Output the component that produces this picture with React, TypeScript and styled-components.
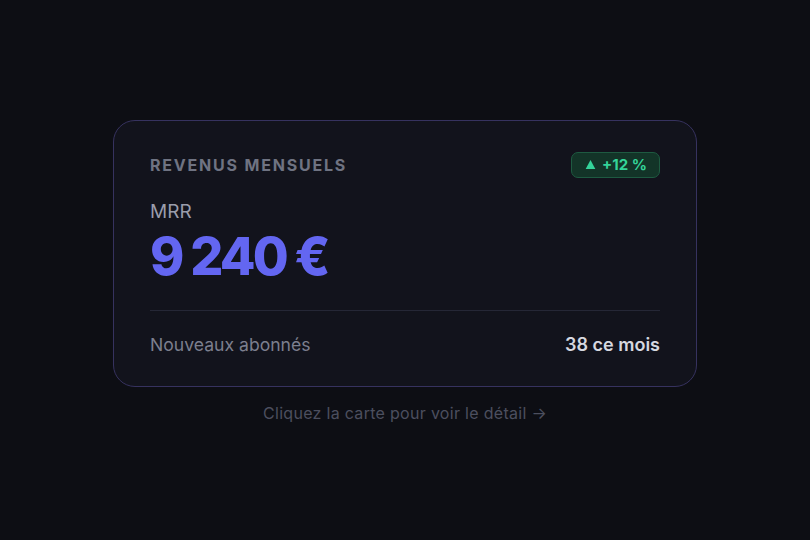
import React from "react";
import styled, { createGlobalStyle } from "styled-components";

const Global = createGlobalStyle`
  html, body { margin: 0; padding: 0; background: #0d0e14; }
  body { font-family: Inter, "Noto Sans", sans-serif; -webkit-font-smoothing: antialiased; }
`;

const Page = styled.div`
  width: 810px;
  height: 540px;
  display: flex;
  flex-direction: column;
  align-items: center;
  justify-content: center;
  gap: 17px;
  box-sizing: border-box;
  padding-top: 2px;
`;

const Card = styled.div`
  width: 584px;
  box-sizing: border-box;
  padding: 31px 36px 30px 36px;
  background: #12131c;
  border: 1px solid #36325f;
  border-radius: 22px;
  cursor: pointer;
`;

const Header = styled.div`
  display: flex;
  justify-content: space-between;
  align-items: center;
`;

const Title = styled.div`
  font-size: 16px;
  font-weight: 700;
  letter-spacing: 1.8px;
  color: #6f7382;
  text-transform: uppercase;
`;

const Badge = styled.div`
  display: flex;
  align-items: center;
  gap: 6px;
  height: 26px;
  box-sizing: border-box;
  padding: 0 12px 0 13px;
  border-radius: 7px;
  background: #133428;
  border: 1px solid #1e5a41;
  color: #34d399;
  font-size: 15px;
  font-weight: 700;
`;

const Label = styled.div`
  margin-top: 22px;
  font-size: 19px;
  line-height: 23px;
  color: #9a9dab;
`;

const Value = styled.div`
  margin-top: 4px;
  font-size: 52px;
  line-height: 60px;
  font-weight: 800;
  letter-spacing: -2.8px;
  color: #6366f1;
`;

const Divider = styled.div`
  height: 1px;
  background: #252736;
  margin-top: 23px;
`;

const Footer = styled.div`
  display: flex;
  justify-content: space-between;
  align-items: center;
  margin-top: 23px;
  font-size: 18px;
  line-height: 22px;
`;

const FooterLabel = styled.span`
  color: #7c7f8e;
  font-size: 17.6px;
`;

const FooterValue = styled.span`
  color: #d6d8e0;
  font-weight: 600;
`;

const Hint = styled.div`
  font-size: 16px;
  line-height: 19px;
  letter-spacing: 0.3px;
  color: #4c4f5f;
`;

export default function App() {
  return (
    <>
      <Global />
      <Page>
        <Card>
          <Header>
            <Title>Revenus mensuels</Title>
            <Badge>
              <svg width="11" height="11" viewBox="0 0 10 10">
                <path d="M5 0.8 L9.4 9.2 H0.6 Z" fill="#34d399" />
              </svg>
              +12 %
            </Badge>
          </Header>
          <Label>MRR</Label>
          <Value>9 240 €</Value>
          <Divider />
          <Footer>
            <FooterLabel>Nouveaux abonnés</FooterLabel>
            <FooterValue>38 ce mois</FooterValue>
          </Footer>
        </Card>
        <Hint>Cliquez la carte pour voir le détail →</Hint>
      </Page>
    </>
  );
}
